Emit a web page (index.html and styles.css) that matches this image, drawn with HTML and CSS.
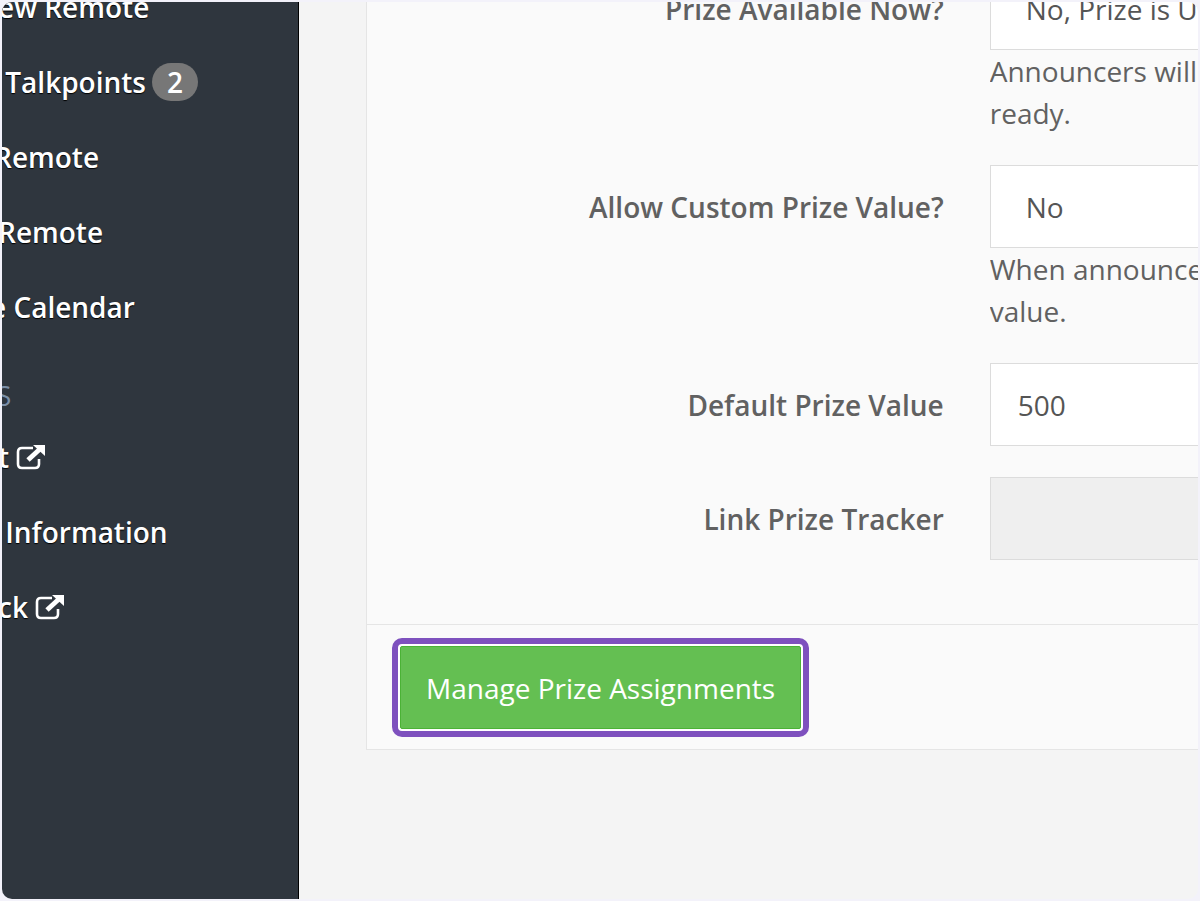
FILE: index.html
```html
<!DOCTYPE html>
<html lang="en">
<head>
<meta charset="utf-8">
<title>Prize</title>
<link rel="stylesheet" href="styles.css">
</head>
<body>
<div class="frame">
  <nav class="sidebar">
    <ul class="menu">
      <li><a class="menu-link" href="#">ew Remote</a></li>
      <li><a class="menu-link" href="#"> Talkpoints<span class="badge">2</span></a></li>
      <li><a class="menu-link cut-letter" href="#">Remote</a></li>
      <li><a class="menu-link" href="#">Remote</a></li>
      <li><a class="menu-link cut-half" href="#">e Calendar</a></li>
      <li class="menu-heading">S</li>
      <li><a class="menu-link" href="#">t<svg class="external" viewBox="0 0 30 26" aria-hidden="true"><path d="M17 4H6Q2 4 2 8V20Q2 24 6 24H19Q23 24 23 20V15" fill="none" stroke="currentColor" stroke-width="2.600"/><path d="M12 16L24 5" fill="none" stroke="currentColor" stroke-width="4.800"/><path d="M17 1H29V12Z" fill="currentColor"/></svg></a></li>
      <li><a class="menu-link" href="#"> Information</a></li>
      <li><a class="menu-link" href="#">ck<svg class="external" viewBox="0 0 30 26" aria-hidden="true"><path d="M17 4H6Q2 4 2 8V20Q2 24 6 24H19Q23 24 23 20V15" fill="none" stroke="currentColor" stroke-width="2.600"/><path d="M12 16L24 5" fill="none" stroke="currentColor" stroke-width="4.800"/><path d="M17 1H29V12Z" fill="currentColor"/></svg></a></li>
    </ul>
  </nav>
  <main class="content">
    <form class="panel">
      <div class="fields">
        <div class="row">
          <label class="label" for="available">Prize Available Now?</label>
          <div class="field">
            <select class="control select" id="available"><option>No, Prize is U</option></select>
            <p class="help">Announcers will<br>ready.</p>
          </div>
        </div>
        <div class="row">
          <label class="label" for="custom">Allow Custom Prize Value?</label>
          <div class="field">
            <select class="control select" id="custom"><option>No</option></select>
            <p class="help">When announce<br>value.</p>
          </div>
        </div>
        <div class="row">
          <label class="label" for="value">Default Prize Value</label>
          <div class="field"><input class="control" id="value" type="text" value="500"></div>
        </div>
        <div class="row">
          <label class="label" for="tracker">Link Prize Tracker</label>
          <div class="field"><input class="control" id="tracker" type="text" disabled></div>
        </div>
      </div>
      <div class="actions"><button class="manage" type="button">Manage Prize Assignments</button></div>
    </form>
  </main>
</div>
</body>
</html>
```
FILE: styles.css
```css
* { box-sizing: border-box; }
body {
  margin: 0;
  padding: 2px;
  background: #f3f2fa;
  color: #616161;
  font: 28px/42px "Open Sans", sans-serif;
}
.frame {
  display: flex;
  height: calc(100vh - 4px);
  overflow: hidden;
  border-radius: 10px;
  background: #f4f4f4;
}
.sidebar {
  flex: 0 0 297px;
  overflow: hidden;
  background: #2f363e;
  border-right: 1px solid #000;
}
.menu {
  list-style: none;
  margin: -33px 0 0;
  padding: 0;
}
.menu-link {
  display: flex;
  align-items: center;
  height: 75px;
  margin-left: -4px;
  color: #fff;
  font-weight: 600;
  text-decoration: none;
  text-shadow: 0 1px 1px #000;
  white-space: pre;
}
.menu-heading {
  height: 75px;
  margin-left: -6px;
  padding-top: 30px;
  color: #7b8fa8;
}
.menu-link.cut-letter { margin-left: -8px; }
.menu-link.cut-half { margin-left: -12px; }
.badge {
  margin-left: 6px;
  width: 46px;
  border-radius: 20px;
  background: #777;
  line-height: 38px;
  text-align: center;
  text-shadow: none;
}
.external {
  width: 30px;
  height: 26px;
  margin-left: 7px;
}
.content {
  flex: 1;
  min-width: 0;
  padding-left: 67px;
}
.panel {
  margin-top: -35px;
  background: #fafafa;
  border: 1px solid #e5e5e5;
  border-width: 0 0 1px 1px;
}
.fields {
  display: flex;
  flex-direction: column;
  gap: 31px;
  padding-bottom: 64px;
}
.row {
  display: grid;
  grid-template-columns: minmax(0, 36fr) minmax(0, 13fr);
  column-gap: 46px;
}
.label {
  padding-top: 21px;
  font-weight: 600;
  text-align: right;
}
.control {
  display: block;
  width: 100%;
  height: 83px;
  margin: 0;
  padding: 0 0 0 27px;
  border: 1px solid #dcdcdc;
  border-right: 0;
  border-radius: 0;
  background: #fff;
  color: #555;
  font: inherit;
  appearance: none;
}
.select { padding-left: 35px; }
.control:disabled { background: #efefef; }
.help {
  margin: 0;
  overflow: hidden;
  white-space: nowrap;
}
.actions {
  padding: 21px 33px 20px;
  border-top: 1px solid #e5e5e5;
}
.manage {
  display: block;
  height: 83px;
  padding: 0 25px;
  border: 1px solid #4bb236;
  border-radius: 2px;
  background: #64bf52;
  color: #fff;
  font: inherit;
  box-shadow: 0 0 0 3px #fff;
  outline: 6px solid #7e51be;
  outline-offset: 2px;
}
```
